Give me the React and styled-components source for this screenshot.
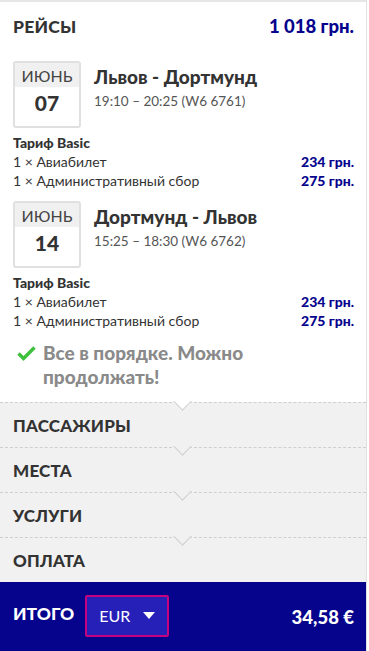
import React from 'react';
import styled, { createGlobalStyle } from 'styled-components';

const GlobalStyle = createGlobalStyle`
  body {
    margin: 0;
    background: #fff;
    font-family: "Source Sans Pro", Lato, "Open Sans", sans-serif;
    color: #333;
  }
`;

const Panel = styled.div`
  width: 367px;
  height: 651px;
  border-top: 2px solid #e6e6e6;
  border-right: 1px solid #e0e0e0;
  box-sizing: border-box;
  display: flex;
  flex-direction: column;
  overflow: hidden;
`;

const Body = styled.div`
  padding: 12px 12px 13px 13px;
`;

const Header = styled.div`
  display: flex;
  justify-content: space-between;
  align-items: center;
  height: 24px;
  margin-bottom: 23px;
`;

const Heading = styled.h2`
  margin: 0;
  font-size: 17.5px;
  font-weight: 900;
  letter-spacing: 0.2px;
`;

const Total = styled.span`
  font-size: 18.5px;
  font-weight: 900;
  color: #06038d;
`;

const Flight = styled.div`
  display: flex;
  align-items: flex-start;
  gap: 13px;
`;

const DateBox = styled.div`
  width: 68px;
  height: 67px;
  border: 2px solid #e0e0e0;
  border-radius: 3px;
  box-sizing: border-box;
  display: flex;
  flex-direction: column;
  overflow: hidden;
`;

const Month = styled.div`
  height: 24px;
  background: #f0f0f0;
  display: flex;
  align-items: center;
  justify-content: center;
  font-size: 16px;
  color: #444;
`;

const Day = styled.div`
  flex: 1;
  display: flex;
  align-items: center;
  justify-content: center;
  padding-bottom: 8px;
  font-size: 21px;
  font-weight: 900;
`;

const Route = styled.div`
  padding-top: 4px;
`;

const RouteTitle = styled.div`
  font-size: 19px;
  font-weight: 900;
  line-height: 24px;
`;

const Times = styled.div`
  font-size: 13.5px;
  line-height: 18px;
  color: #555;
  margin-top: 3px;
`;

const Fare = styled.div`
  margin-top: 5px;
  margin-bottom: 11px;
  font-size: 14px;
  line-height: 19px;
`;

const FareName = styled.div`
  font-weight: 900;
`;

const Line = styled.div`
  display: flex;
  justify-content: space-between;
`;

const Price = styled.span`
  font-weight: 900;
  color: #06038d;
`;

const Ok = styled.div`
  display: flex;
  gap: 7px;
  padding-left: 4px;
  margin-top: 2px;
  font-size: 19px;
  font-weight: 900;
  line-height: 24px;
  color: #8a8a8a;
  svg { flex: none; margin-top: 4px; }
`;

const Section = styled.div`
  position: relative;
  height: 45px;
  flex: none;
  background: #f1f1f1;
  border-top: 1px dashed #cfcfcf;
  box-sizing: border-box;
  display: flex;
  align-items: center;
  padding: 1px 13px 0;
  font-size: 17px;
  font-weight: 900;
  letter-spacing: 0.2px;

  &::before {
    content: '';
    position: absolute;
    left: 176px;
    top: -8px;
    width: 12px;
    height: 12px;
    background: ${p => (p.$first ? '#fff' : '#f1f1f1')};
    border-right: 1px solid #cfcfcf;
    border-bottom: 1px solid #cfcfcf;
    transform: rotate(45deg);
  }
`;

const Footer = styled.div`
  flex: 1;
  background: #06038d;
  display: flex;
  align-items: center;
  padding: 0 12px 0 13px;
  color: #fff;
`;

const FooterLabel = styled.span`
  font-size: 17.5px;
  font-weight: 900;
  margin-right: 11px;
  margin-top: -6px;
`;

const Select = styled.div`
  width: 84px;
  height: 42px;
  box-sizing: border-box;
  border: 2px solid #c6007e;
  border-radius: 2px;
  background: #2720b8;
  display: flex;
  align-items: center;
  justify-content: space-between;
  padding: 0 12px;
  margin-top: -2px;
  font-size: 16px;
`;

const Arrow = styled.span`
  width: 0;
  height: 0;
  border-left: 6px solid transparent;
  border-right: 6px solid transparent;
  border-top: 7px solid #fff;
`;

const FooterTotal = styled.span`
  margin-left: auto;
  font-size: 18.5px;
  font-weight: 900;
`;

const flights = [
  {
    day: '07',
    route: 'Львов - Дортмунд',
    times: '19:10 – 20:25 (W6 6761)',
  },
  {
    day: '14',
    route: 'Дортмунд - Львов',
    times: '15:25 – 18:30 (W6 6762)',
  },
];

const Check = () => (
  <svg width="19" height="16" viewBox="0 0 19 16">
    <path d="M1.5 8.5l5 5L17.5 2.5" fill="none" stroke="#3fc13f" strokeWidth="3.4" />
  </svg>
);

export default function App() {
  return (
    <>
      <GlobalStyle />
      <Panel>
        <Body>
          <Header>
            <Heading>РЕЙСЫ</Heading>
            <Total>1 018 грн.</Total>
          </Header>
          {flights.map(f => (
            <div key={f.day}>
              <Flight>
                <DateBox>
                  <Month>ИЮНЬ</Month>
                  <Day>{f.day}</Day>
                </DateBox>
                <Route>
                  <RouteTitle>{f.route}</RouteTitle>
                  <Times>{f.times}</Times>
                </Route>
              </Flight>
              <Fare>
                <FareName>Тариф Basic</FareName>
                <Line>
                  <span>1 × Авиабилет</span>
                  <Price>234 грн.</Price>
                </Line>
                <Line>
                  <span>1 × Административный сбор</span>
                  <Price>275 грн.</Price>
                </Line>
              </Fare>
            </div>
          ))}
          <Ok>
            <Check />
            <span>Все в порядке. Можно<br />продолжать!</span>
          </Ok>
        </Body>
        <Section $first>ПАССАЖИРЫ</Section>
        <Section>МЕСТА</Section>
        <Section>УСЛУГИ</Section>
        <Section>ОПЛАТА</Section>
        <Footer>
          <FooterLabel>ИТОГО</FooterLabel>
          <Select>
            <span>EUR</span>
            <Arrow />
          </Select>
          <FooterTotal>34,58 €</FooterTotal>
        </Footer>
      </Panel>
    </>
  );
}
